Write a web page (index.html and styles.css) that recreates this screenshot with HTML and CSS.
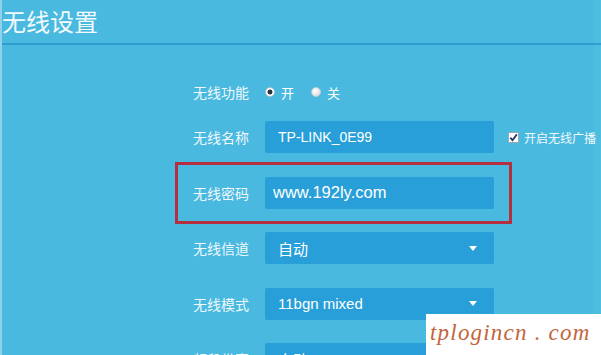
FILE: index.html
```html
<!DOCTYPE html>
<html lang="zh">
<head>
<meta charset="utf-8">
<title>无线设置</title>
<link rel="stylesheet" href="styles.css">
</head>
<body>
<div class="page">
  <header class="header"><h1 class="title">无线设置</h1></header>
  <main class="form">
    <div class="row row-radio">
      <span class="label">无线功能</span>
      <span class="radio checked"></span><span class="opt">开</span>
      <span class="radio"></span><span class="opt">关</span>
    </div>
    <div class="row">
      <span class="label">无线名称</span>
      <div class="field"><span class="value value-name">TP-LINK_0E99</span></div>
      <span class="check"><svg width="11" height="11" viewBox="0 0 11 11"><rect x="0.5" y="0.5" width="10" height="10" fill="#fff" stroke="#9aa" stroke-width="1"/><path d="M2.3 5.6 L4.5 8.2 L8.8 2.4" fill="none" stroke="#2b3a6e" stroke-width="1.8"/></svg></span>
      <span class="check-label">开启无线广播</span>
    </div>
    <div class="row highlight">
      <span class="label">无线密码</span>
      <div class="field field-pass"><span class="value value-pass">www.192ly.com</span></div>
    </div>
    <div class="row">
      <span class="label">无线信道</span>
      <div class="field select"><span class="value">自动</span><span class="arrow"></span></div>
    </div>
    <div class="row">
      <span class="label">无线模式</span>
      <div class="field select"><span class="value">11bgn mixed</span><span class="arrow"></span></div>
    </div>
    <div class="row">
      <span class="label">频段带宽</span>
      <div class="field select"><span class="value">自动</span><span class="arrow"></span></div>
    </div>
  </main>
  <div class="watermark">tplogincn . com</div>
</div>
</body>
</html>
```
FILE: styles.css
```css
*, *::before, *::after { box-sizing: border-box; margin: 0; padding: 0; }
html, body { width: 601px; height: 355px; overflow: hidden; }
body {
  background: #49b9e0;
  font-family: "Liberation Sans", "Noto Sans CJK SC", sans-serif;
  color: #fff;
}
.page {
  position: relative;
  width: 601px;
  height: 355px;
  background: linear-gradient(to right, #8fd0ea 0 2px, #49b9e0 2px 594px, #4fbde0 594px);
  padding-left: 2px;
  overflow: hidden;
}
.header {
  height: 45px;
  border-bottom: 2px solid #2f9dd0;
  display: flex;
  align-items: center;
}
.title {
  font-family: "Noto Sans CJK SC", sans-serif;
  font-weight: 400;
  font-size: 24px;
  line-height: 1;
  color: #f2fafd;
  margin-top: -2px;
}
.form {
  padding-top: 31px;
  padding-left: 191px;
  display: flex;
  flex-direction: column;
  gap: 23.5px;
}
.row {
  position: relative;
  display: flex;
  align-items: center;
  height: 32px;
}
.row-radio { margin-bottom: -10.5px; }
.label {
  width: 72px;
  font-family: "Noto Sans CJK SC", sans-serif;
  font-size: 14px;
  color: #eef8fc;
}
.field {
  width: 229px;
  height: 32px;
  background: #289fd9;
  border-radius: 2px;
  display: flex;
  align-items: center;
  padding-left: 13px;
  padding-right: 17px;
}
.field-pass { padding-left: 8px; }
.value {
  font-size: 15px;
  font-family: "Liberation Sans", "Noto Sans CJK SC", sans-serif;
  color: #fff;
  flex: 1;
}
.value-name { font-size: 14px; }
.value-pass { font-size: 16.5px; }
.arrow {
  width: 0; height: 0;
  border-left: 4px solid transparent;
  border-right: 4px solid transparent;
  border-top: 5px solid #fff;
}
.radio {
  width: 10px; height: 10px;
  border-radius: 50%;
  background: radial-gradient(circle at 40% 35%, #fff, #d2d6da);
  border: 1px solid #c7cfd6;
}
.radio.checked {
  background: radial-gradient(circle, #2c3440 0 2.2px, #fff 2.8px);
  border-color: #b8c2ca;
}
.opt {
  font-family: "Noto Sans CJK SC", sans-serif;
  font-size: 13px;
  margin-left: 6px;
  margin-right: 17px;
}
.check { display: flex; margin-left: 14px; }
.check-label {
  font-family: "Noto Sans CJK SC", sans-serif;
  font-size: 12px;
  margin-left: 5px;
  color: #f2fafd;
  white-space: nowrap;
}
.highlight::after {
  content: "";
  position: absolute;
  left: -18px;
  top: -15px;
  width: 337px;
  height: 62px;
  border: 3px solid #b5303f;
}
.watermark {
  position: absolute;
  right: 0;
  bottom: 0;
  width: 175px;
  height: 41px;
  background: #fff;
  color: #c2653c;
  font-family: "Liberation Serif", serif;
  font-style: italic;
  font-size: 23px;
  padding-left: 4px;
  padding-top: 6px;
  letter-spacing: 1.2px;
  white-space: pre;
}
```
